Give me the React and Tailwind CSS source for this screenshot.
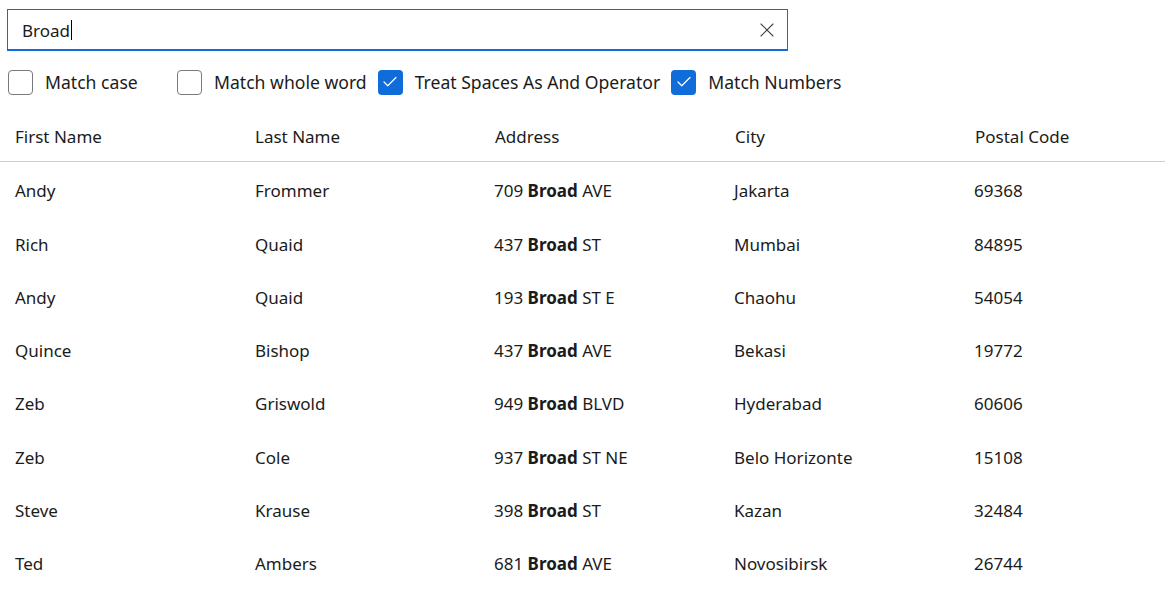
import { X, Check } from 'lucide-react';

const rows = [
  ['Andy', 'Frommer', '709', 'AVE', 'Jakarta', '69368'],
  ['Rich', 'Quaid', '437', 'ST', 'Mumbai', '84895'],
  ['Andy', 'Quaid', '193', 'ST E', 'Chaohu', '54054'],
  ['Quince', 'Bishop', '437', 'AVE', 'Bekasi', '19772'],
  ['Zeb', 'Griswold', '949', 'BLVD', 'Hyderabad', '60606'],
  ['Zeb', 'Cole', '937', 'ST NE', 'Belo Horizonte', '15108'],
  ['Steve', 'Krause', '398', 'ST', 'Kazan', '32484'],
  ['Ted', 'Ambers', '681', 'AVE', 'Novosibirsk', '26744'],
];

const options = [
  { label: 'Match case', checked: false },
  { label: 'Match whole word', checked: false },
  { label: 'Treat Spaces As And Operator', checked: true },
  { label: 'Match Numbers', checked: true },
];

function CheckBox({ label, checked }) {
  return (
    <label className="flex min-w-[158px] items-center gap-3">
      {checked ? (
        <span className="flex h-[25px] w-[25px] items-center justify-center rounded-[4px] bg-[#0f6cd8]">
          <Check className="h-[18px] w-[18px] text-white" strokeWidth={1.6} />
        </span>
      ) : (
        <span className="h-[25px] w-[25px] rounded-[4px] border border-[#7a7a7a] bg-white" />
      )}
      <span className="text-[17.6px]">{label}</span>
    </label>
  );
}

export default function App() {
  return (
    <div
      className="h-[600px] w-[1170px] overflow-hidden bg-white text-[17px] text-[#1b1b1b]"
      style={{ fontFamily: '"Noto Sans", sans-serif' }}
    >
      <div className="px-[7px] pt-[9px]">
        <div className="flex h-[42px] w-[781px] items-center border border-b-2 border-[#0f6cd8] pl-[14px] pr-[8px]">
          <span className="flex-1 translate-y-[1px]">
            Broad<span className="ml-[1px] inline-block h-[20px] w-px translate-y-[3px] bg-black" />
          </span>
          <X className="h-6 w-6 text-[#444]" strokeWidth={1.1} />
        </div>
      </div>

      <div className="mt-[18px] flex items-center gap-[11px] pl-[8px]">
        {options.map((o) => (
          <CheckBox key={o.label} {...o} />
        ))}
      </div>

      <div className="mt-[17px] w-[1165px]">
        <div className="grid h-[50px] grid-cols-[240px_240px_240px_240px_205px] items-center border-b border-[#cfcfcf]">
          {['First Name', 'Last Name', 'Address', 'City', 'Postal Code'].map((h) => (
            <div key={h} className="px-[15px]">{h}</div>
          ))}
        </div>
        <div className="pt-[2px]">
          {rows.map((r, i) => (
            <div key={i} className="grid h-[53.3px] grid-cols-[240px_240px_240px_240px_205px] items-center">
              <div className="px-[15px]">{r[0]}</div>
              <div className="px-[15px]">{r[1]}</div>
              <div className="px-[14px]">
                {r[2]} <b className="font-bold">Broad</b> {r[3]}
              </div>
              <div className="px-[14px]">{r[4]}</div>
              <div className="px-[14px]">{r[5]}</div>
            </div>
          ))}
        </div>
      </div>
    </div>
  );
}
